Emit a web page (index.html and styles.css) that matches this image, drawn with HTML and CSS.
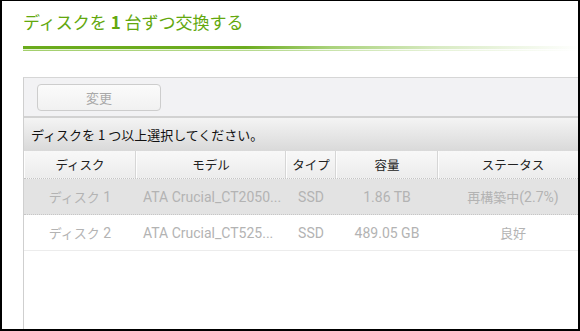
FILE: index.html
```html
<!DOCTYPE html>
<html lang="ja">
<head>
<meta charset="utf-8">
<link rel="stylesheet" href="styles.css">
</head>
<body>
<div class="frame">
  <h1 class="title">ディスクを <span class="num">1</span> 台ずつ交換する</h1>
  <div class="rule"><div class="rule-a"></div><div class="rule-b"></div></div>
  <div class="panel">
    <div class="toolbar">
      <button class="btn" disabled>変更</button>
    </div>
    <div class="msg">ディスクを 1 つ以上選択してください。</div>
    <div class="grid head">
      <div class="cell">ディスク</div>
      <div class="cell">モデル</div>
      <div class="cell">タイプ</div>
      <div class="cell">容量</div>
      <div class="cell">ステータス</div>
    </div>
    <div class="grid row sel">
      <div class="cell"><span class="jp">ディスク</span>&nbsp;1</div>
      <div class="cell left">ATA Crucial_CT2050...</div>
      <div class="cell">SSD</div>
      <div class="cell">1.86 TB</div>
      <div class="cell"><span class="jp">再構築中</span>(2.7%)</div>
    </div>
    <div class="grid row">
      <div class="cell"><span class="jp">ディスク</span>&nbsp;2</div>
      <div class="cell left">ATA Crucial_CT525...</div>
      <div class="cell">SSD</div>
      <div class="cell">489.05 GB</div>
      <div class="cell"><span class="jp">良好</span></div>
    </div>
  </div>
</div>
</body>
</html>
```
FILE: styles.css
```css
html, body { margin: 0; padding: 0; background: #fff; }
.frame {
  width: 580px; height: 331px; box-sizing: border-box;
  border: 2px solid #000; border-top-width: 1px;
  overflow: hidden;
  padding-left: 21px;
  display: flex; flex-direction: column;
  font-family: Roboto, "Noto Sans CJK JP", sans-serif;
}
.title {
  margin: 0; padding-top: 10px;
  font-family: "Noto Sans CJK JP", sans-serif;
  font-weight: normal; font-size: 17px; line-height: 22px;
  color: #63a80e; white-space: nowrap;
}
.title .num { font-weight: bold; }
.rule { margin-top: 13px; width: 556px; }
.rule-a { height: 3px; background: linear-gradient(to right, #6aab1c 0%, #6cac1f 40%, #a9d27a 55%, #d9ebc4 75%, #ffffff 100%); }
.rule-b { height: 1px; background: linear-gradient(to right, #e6f1d8 0%, #f2f8ea 50%, #fff 100%); }
.rule::after { content: ""; display: block; height: 1px; background: linear-gradient(to right, #a3cf6c 0%, #b9db93 45%, #e6f2d8 75%, #fff 100%); }
.panel {
  margin-top: 26px; flex: 1;
  border-left: 1px solid #cfcfcf; border-top: 1px solid #d6d6d6;
  width: 600px;
}
.toolbar {
  background: #f2f2f4; height: 40px; box-sizing: border-box;
  padding: 6px 0 0 13px;
  border-bottom: 2px solid #d2d2d2;
}
.btn {
  width: 124px; height: 27px; box-sizing: border-box;
  border: 1px solid #cdcdcd; border-radius: 4px;
  background: linear-gradient(#fbfbfb, #f1f1f1);
  color: #a9a9a9; font-family: "Noto Sans CJK JP", sans-serif; font-size: 13px;
  padding: 0; display: block;
}
.msg {
  height: 33px; box-sizing: border-box; padding-left: 7px;
  display: flex; align-items: center;
  background: linear-gradient(#f4f4f4, #d9d9d9);
  font-family: "Noto Sans CJK JP", sans-serif; font-size: 13px; color: #111;
  white-space: nowrap;
}
.grid {
  display: grid;
  grid-template-columns: 112px 150px 50px 102px 150px;
}
.head {
  height: 28px; box-sizing: border-box;
  background: linear-gradient(#f8f8f8, #ececec);
  border-bottom: 1px dotted #c4c4c4;
  font-family: "Noto Sans CJK JP", sans-serif; font-size: 12.5px; color: #222;
}
.head .cell {
  border-right: 1px solid #d6d6d6; border-left: 1px solid #fdfdfd;
}
.cell {
  display: flex; align-items: center; justify-content: center;
  white-space: nowrap; overflow: hidden;
}
.cell.left { justify-content: flex-start; padding-left: 7px; }
.jp { font-family: "Noto Sans CJK JP", sans-serif; font-size: 13px; }
.row {
  height: 36px; box-sizing: border-box;
  font-size: 14px; color: #b3b3b3;
  border-bottom: 1px solid #ececec;
}
.row.sel { background: #e3e3e3; border-bottom: 1px dotted #c6c6c6; }
```
